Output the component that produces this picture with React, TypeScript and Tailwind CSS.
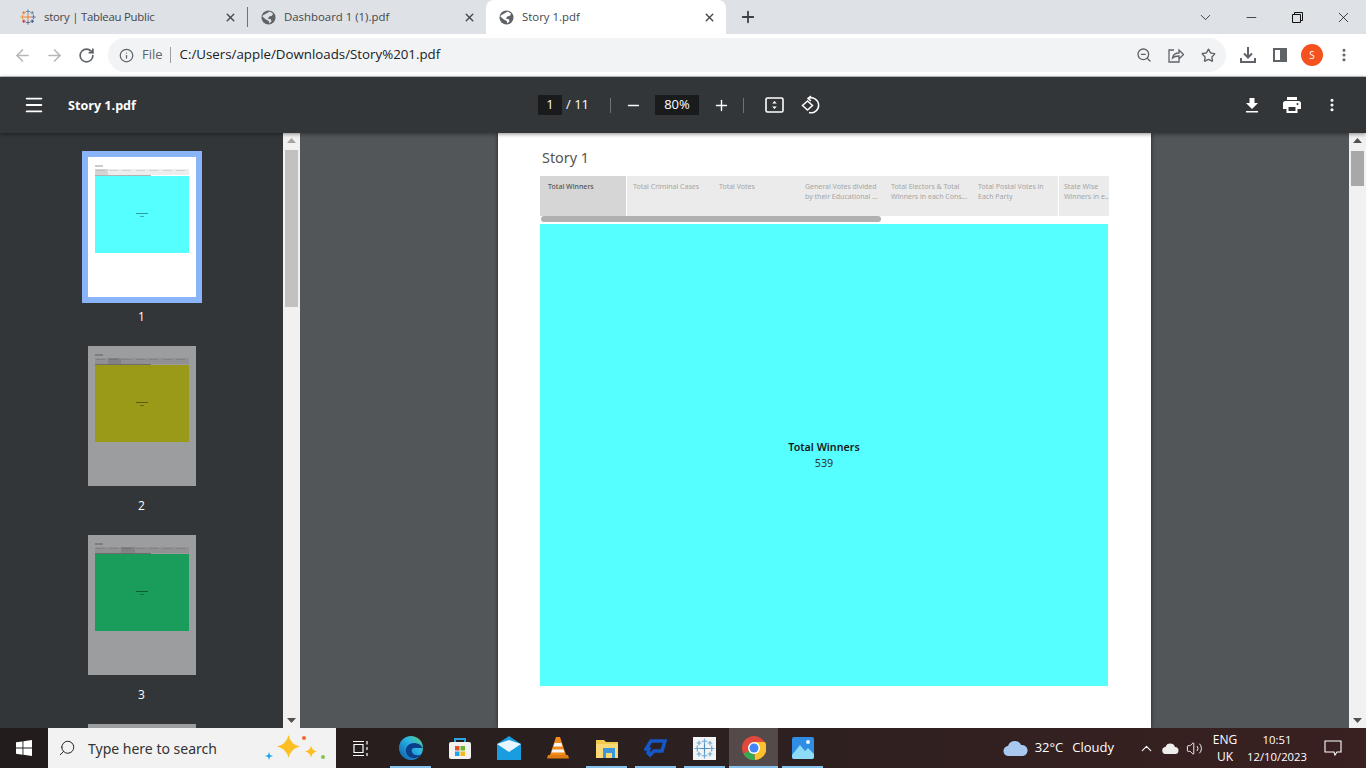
import React from "react";
import { ArrowLeft, ArrowRight, RotateCw, Info, ZoomOut, Star, X, Plus, Minus, ChevronDown, ChevronUp, MoreVertical, Menu, Search, Volume2 } from "lucide-react";

const uiFont = "font-['Open_Sans','Noto_Sans',sans-serif]";

type ThumbProps = { page: number; color: string; active?: boolean; tab: number };

const Thumb: React.FC<ThumbProps> = ({ page, color, active, tab }) => {
  return (
    <div className="flex shrink-0 flex-col items-center">
      <div className={active ? "border-[6px] border-[#8ab4f8]" : "border-[6px] border-transparent"}>
        <div className={`relative h-[140px] w-[108px] ${active ? "bg-white" : "bg-[#9c9d9f]"}`}>
          <div className="px-[7px] pt-[8px]">
            <div className="h-[2px] w-[8px] bg-black/20" />
            <div className="mt-[2px] flex h-[6px] w-[94px] bg-black/[0.07]">
              {[0, 1, 2, 3, 4, 5, 6].map((i) => (
                <div key={i} className={`flex-1 px-[1px] pt-[1px] ${i === tab ? "bg-black/10" : ""}`}>
                  <div className="h-[1px] w-[80%] bg-black/10" />
                </div>
              ))}
            </div>
            <div className="h-[1px] w-[56px] bg-black/30" />
            <div className={`flex h-[77px] w-[94px] flex-col items-center justify-center ${color}`}>
              <div className="h-[1px] w-[12px] bg-black/40" />
              <div className="mt-[2px] h-[1px] w-[4px] bg-black/30" />
            </div>
          </div>
        </div>
      </div>
      <div className={`mt-[4px] h-[20px] text-[12px] leading-[20px] text-white ${uiFont}`}>{page}</div>
    </div>
  );
};

const StoryTab: React.FC<{ lines: string[]; box: string; active?: boolean }> = ({ lines, box, active }) => {
  return (
    <div className={`h-full shrink-0 pt-[6px] text-[7px] leading-[10px] ${box} ${active ? "bg-[#d6d6d6] font-medium text-[#555]" : "text-[#a5a5a5]"}`}>
      {lines.map((l) => (
        <div key={l} className="whitespace-nowrap">{l}</div>
      ))}
    </div>
  );
};

const TaskIcon: React.FC<{ children: React.ReactNode; active?: boolean; running?: boolean }> = ({ children, active, running }) => {
  return (
    <div className={`relative flex h-full w-[49px] items-center justify-center ${active ? "bg-[#544a4a]" : ""}`}>
      {children}
      {running && <div className={`absolute bottom-0 h-[2px] bg-[#86c2ee] ${active ? "left-0 right-0" : "left-[4px] right-[4px]"}`} />}
    </div>
  );
};

const ChromeTab: React.FC<{ title: string; icon: React.ReactNode; width: string; active?: boolean; titleClass?: string }> = ({ title, icon, width, active, titleClass }) => {
  return (
    <div className={`flex h-full shrink-0 items-center pl-[12px] pr-[10px] ${width} ${active ? "rounded-t-[8px] bg-white" : ""}`}>
      <div className="flex h-[16px] w-[16px] shrink-0 items-center justify-center">{icon}</div>
      <div className={`ml-[8px] flex-1 truncate text-[11.4px] text-[#45474a] ${titleClass ?? ""}`}>{title}</div>
      <X size={13} strokeWidth={2.6} className="text-[#45474a]" />
    </div>
  );
};

const PageGlobe: React.FC<{ bg: string }> = ({ bg }) => {
  return (
    <svg width="15" height="15" viewBox="0 0 16 16">
      <circle cx="8" cy="8" r="7.5" fill="#5f6368" />
      <path d="M9.5 1.700l3.300 2-1 2.500-3 .6-1.600 2.200 3.300.8.800 2.200-2.300 2.300-.800-2.700-3-1.500-3.700-3.200.300-1z" fill={bg} />
    </svg>
  );
};

const ScrollArrow: React.FC<{ up?: boolean; color: string; pos: string }> = ({ up, color, pos }) => {
  return (
    <svg width="9" height="5" viewBox="0 0 9 5" className={`absolute left-[4px] ${pos}`} fill={color}>
      <path d={up ? "M4.5 0L9 5H0z" : "M4.5 5L9 0H0z"} />
    </svg>
  );
};

const TableauMark: React.FC<{ size: number; mono?: boolean }> = ({ size, mono }) => {
  const plus = [
    [8, 8, 3.4, mono ? "#4f8fc0" : "#e8762c"],
    [8, 2.5, 2.2, mono ? "#6fa8d0" : "#5b879b"],
    [8, 13.5, 2.2, mono ? "#6fa8d0" : "#5b6591"],
    [2.5, 8, 2.2, mono ? "#6fa8d0" : "#eb912c"],
    [13.5, 8, 2.2, mono ? "#6fa8d0" : "#5b6591"],
    [3.8, 3.8, 1.8, mono ? "#6fa8d0" : "#e8762c"],
    [12.2, 3.8, 1.8, mono ? "#6fa8d0" : "#59879b"],
    [3.8, 12.2, 1.8, mono ? "#6fa8d0" : "#c72035"],
    [12.2, 12.2, 1.8, mono ? "#6fa8d0" : "#1f457e"],
  ] as const;
  return (
    <svg width={size} height={size} viewBox="0 0 16 16">
      {plus.map(([x, y, r, c]) => (
        <path key={`${x}-${y}`} d={`M${x - r} ${y}H${x + r}M${x} ${y - r}V${y + r}`} stroke={c} strokeWidth="0.9" />
      ))}
    </svg>
  );
};

export default function App() {
  return (
    <div className={`flex h-[768px] w-[1366px] flex-col overflow-hidden bg-[#525659] ${uiFont}`}>
      {/* tab strip */}
      <div className="flex h-[34px] shrink-0 items-stretch bg-[#dee1e6]">
        <div className="flex h-full items-stretch pl-[8px]">
          <ChromeTab width="w-[239px]" title="story | Tableau Public" titleClass="tracking-[-0.25px]" icon={<TableauMark size={16} />} />
          <div className="my-[7px] w-[1px] bg-[#6f7276]" />
          <ChromeTab width="w-[238px]" title="Dashboard 1 (1).pdf" icon={<PageGlobe bg="#dee1e6" />} />
          <ChromeTab width="w-[240px]" title="Story 1.pdf" active icon={<PageGlobe bg="#ffffff" />} />
          <div className="ml-[13px] flex items-center">
            <Plus size={18} strokeWidth={2.4} className="text-[#3c4043]" />
          </div>
        </div>
        <div className="flex-1" />
        <div className="flex items-center text-[#111]">
          <div className="flex w-[46px] justify-center"><ChevronDown size={17} strokeWidth={1.1} /></div>
          <div className="flex w-[46px] justify-center"><Minus size={15} strokeWidth={1.2} /></div>
          <div className="flex w-[46px] justify-center">
            <svg width="11" height="11" viewBox="0 0 11 11" fill="none" stroke="#111"><path d="M.5 2.500h8v8h-8zM2.500 2.500v-2h8v8h-2" /></svg>
          </div>
          <div className="flex w-[46px] justify-center"><X size={17} strokeWidth={1.1} /></div>
        </div>
      </div>

      {/* address bar */}
      <div className="flex h-[42px] shrink-0 items-center bg-white text-[#5f6368]">
        <div className="flex w-[108px] items-center pl-[13px]">
          <ArrowLeft size={19} className="text-[#b5b7ba]" />
          <ArrowRight size={19} className="ml-[13px] text-[#b5b7ba]" />
          <RotateCw size={17} strokeWidth={2.4} className="ml-[14px] text-[#5f6368]" />
        </div>
        <div className="flex h-[34px] w-[1118px] items-center rounded-full bg-[#f1f3f4] pl-[11px]">
          <Info size={15} />
          <span className="ml-[8px] text-[13px] text-[#5f6368]">File</span>
          <div className="ml-[7px] h-[16px] w-[1px] bg-[#9aa0a6]" />
          <span className="ml-[9px] text-[13.3px] text-[#202124]">C:/Users/apple/Downloads/Story%201.pdf</span>
          <div className="flex-1" />
          <ZoomOut size={16} className="mr-[1px]" />
          <svg width="16" height="15" viewBox="0 0 16 15" fill="none" stroke="#5f6368" strokeWidth="1.3" className="ml-[15px]">
            <path d="M6 2H1v12h10v-3M4.500 10c.5-3 3-5 6.500-5V2l4.500 4.500L11 11V8c-3 0-5 .5-6.500 2z" />
          </svg>
          <Star size={15} strokeWidth={2.2} className="ml-[17px]" />
          <div className="w-[10px]" />
        </div>
        <div className="flex flex-1 items-center">
          <svg width="18" height="18" viewBox="0 0 18 18" className="ml-[13px]" fill="none" stroke="#5f6368" strokeWidth="2">
            <path d="M9 1v10M5 7.500l4 4 4-4M2 12v4h14v-4" />
          </svg>
          <div className="ml-[16px] flex h-[14px] w-[14px] justify-end border-2 border-[#5f6368]">
            <div className="h-full w-[5px] bg-[#5f6368]" />
          </div>
          <div className="ml-[14px] flex h-[22px] w-[22px] items-center justify-center rounded-full bg-[#f4511e] text-[10px] text-white">S</div>
          <MoreVertical size={16} strokeWidth={2.6} className="ml-[13px]" />
        </div>
      </div>
      <div className="h-[1px] shrink-0 bg-[#c8cacc]" />

      {/* viewer toolbar */}
      <div className="z-10 flex h-[56px] shrink-0 items-center bg-[#323639] text-white shadow-[0_1px_4px_rgba(0,0,0,0.45)]">
        <div className="flex w-[538px] items-center">
          <Menu size={22} strokeWidth={2} className="ml-[23px]" />
          <span className="ml-[23px] pt-[2px] text-[12.6px] font-bold">Story 1.pdf</span>
        </div>
        <div className="flex items-center text-[13px]">
          <div className="flex h-[20px] w-[24px] items-center justify-center bg-[#191b1c]">1</div>
          <span className="ml-[4px] w-[30px]">/ 11</span>
          <div className="ml-[14px] h-[15px] w-[1px] bg-[#6f7275]" />
          <Minus size={17} strokeWidth={2} className="ml-[14px]" />
          <div className="ml-[13px] flex h-[20px] w-[44px] items-center justify-center bg-[#191b1c]">80%</div>
          <Plus size={17} strokeWidth={2} className="ml-[14px]" />
          <div className="ml-[13px] h-[15px] w-[1px] bg-[#6f7275]" />
          <svg width="20" height="18" viewBox="0 0 20 18" fill="none" className="ml-[21px]">
            <rect x="1" y="2" width="17" height="14" rx="1.5" stroke="white" strokeWidth="1.6" />
            <path d="M9.500 5l2.300 2.600H7.200zM9.500 13l2.300-2.600H7.200z" fill="white" />
          </svg>
          <svg width="20" height="20" viewBox="0 0 20 20" fill="none" className="ml-[16px]" stroke="white" strokeWidth="1.5">
            <path d="M7 3.500a7.500 7.500 0 1 1 1 14" />
            <path d="M10 1L7 3.500 10 6" />
            <path d="M6.500 6L1.500 10.500l5 4.500 5-4.500z" />
          </svg>
        </div>
        <div className="flex-1" />
        <svg width="14" height="16" viewBox="0 0 14 16" fill="white" className="mr-[24px]">
          <path d="M4.500 1h5v5h3.500L7 12 1 6h3.500zM1 14h12v1.600H1z" />
        </svg>
        <svg width="18" height="16" viewBox="0 0 18 16" fill="white" className="mr-[23px]">
          <path d="M4 0h10v3H4zM2.500 4h13A2.500 2.500 0 0 1 18 6.500V12h-3.500v4h-11v-4H0V6.500A2.500 2.500 0 0 1 2.500 4zM5.500 10v4h7v-4zM14.500 6a1 1 0 1 0 0 2 1 1 0 0 0 0-2z" fillRule="evenodd" />
        </svg>
        <MoreVertical size={16} strokeWidth={2.6} className="mr-[26px]" />
      </div>

      {/* viewer body */}
      <div className="flex h-[595px] shrink-0 overflow-hidden">
        <div className="flex w-[283px] shrink-0 flex-col items-center gap-[13px] overflow-hidden bg-[#323639] pt-[18px]">
          <Thumb page={1} color="bg-[#55ffff]" tab={0} active />
          <Thumb page={2} color="bg-[#9a9a18]" tab={1} />
          <Thumb page={3} color="bg-[#1a9c5b]" tab={2} />
          <div className="mt-[6px] h-[20px] w-[108px] shrink-0 bg-[#9c9d9f]" />
        </div>
        <div className="relative w-[17px] shrink-0 bg-[#f1f1f1]">
          <div className="absolute left-[2px] right-[2px] top-[17px] h-[157px] bg-[#c1c1c1]" />
          <ScrollArrow up color="#a3a3a3" pos="top-[5px]" />
          <ScrollArrow color="#505050" pos="bottom-[5px]" />
        </div>
        <div className="flex flex-1 overflow-hidden pl-[198px]">
          <div className="h-full w-[653px] shrink-0 bg-white pl-[42px] pt-[16px] font-['Noto_Sans',sans-serif] shadow-[0_0_4px_rgba(0,0,0,0.6)]">
            <div className="ml-[2px] text-[14.4px] leading-[18px] text-[#555]">Story 1</div>
            <div className="mt-[9px] flex h-[40px] w-[569px] overflow-hidden bg-[#ebebeb]">
              <StoryTab box="w-[86px] pl-[8px]" lines={["Total Winners"]} active />
              <StoryTab box="w-[85px] border-l border-white pl-[6px]" lines={["Total Criminal Cases"]} />
              <StoryTab box="w-[86px] pl-[8px]" lines={["Total Votes"]} />
              <StoryTab box="w-[86px] pl-[8px]" lines={["General Votes divided", "by their Educational ..."]} />
              <StoryTab box="w-[87px] pl-[8px]" lines={["Total Electors & Total", "Winners in each Cons..."]} />
              <StoryTab box="w-[88px] pl-[8px]" lines={["Total Postal Votes in", "Each Party"]} />
              <StoryTab box="w-[51px] border-l border-white pl-[5px]" lines={["State Wise", "Winners in e.."]} />
            </div>
            <div className="ml-[1px] h-[6px] w-[340px] rounded-full bg-[#b0b0b0]" />
            <div className="mt-[2px] flex h-[462px] w-[568px] flex-col items-center justify-center bg-[#55ffff] text-[10.7px] leading-[16px] text-[#333]">
              <div className="font-semibold text-[#1a1a1a]">Total Winners</div>
              <div>539</div>
            </div>
          </div>
        </div>
        <div className="relative w-[17px] shrink-0 bg-[#f1f1f1]">
          <div className="absolute left-[2px] right-[2px] top-[18px] h-[35px] bg-[#a8a8a8]" />
          <ScrollArrow up color="#505050" pos="top-[5px]" />
          <ScrollArrow color="#505050" pos="bottom-[5px]" />
        </div>
      </div>

      {/* taskbar */}
      <div className="flex h-[40px] shrink-0 items-center bg-gradient-to-r from-[#231c1c] via-[#2c2020] to-[#3a2020] text-white">
        <div className="flex h-full w-[48px] items-center justify-center">
          <svg width="16" height="16" viewBox="0 0 16 16" fill="white"><path d="M0 2.300l6.500-.9v6.200H0zM7.400 1.300L16 0v7.600H7.400zM0 8.500h6.500v6.200L0 13.800zM7.400 8.500H16V16l-8.600-1.200z" /></svg>
        </div>
        <div className="flex h-full w-[288px] items-center bg-[#f2f2f2] pl-[11px]">
          <Search size={18} strokeWidth={1.3} className="-ml-[1px] -scale-x-100 text-[#222]" />
          <span className="ml-[12px] font-['Noto_Sans',sans-serif] text-[14px] text-[#333]">Type here to search</span>
          <svg width="66" height="28" viewBox="0 0 66 28" className="ml-[45px]">
            <path d="M26.500 1q2 9.500 11.500 11.500-9.500 2-11.500 11.500-2-9.500-11.500-11.500 9.500-2 11.500-11.500z" fill="#fbbf24" />
            <path d="M49 11.500q1 5 6 6-5 1-6 6-1-5-6-6 5-1 6-6z" fill="#fbbf24" />
            <path d="M7 18l1 3 3 1-3 1-1 3-1-3-3-1 3-1z" fill="#1ea5e8" />
            <circle cx="42" cy="4" r="2" fill="#f0682b" />
            <circle cx="61" cy="23" r="2" fill="#8bc34a" />
          </svg>
        </div>
        <div className="flex h-full w-[50px] items-center justify-center">
          <svg width="17" height="17" viewBox="0 0 17 17" fill="none" stroke="white" strokeWidth="1.2"><path d="M0 1.500h11M0 15.500h11M1 4.500h9v8H1zM14 1v3.500M14 7v3M14 13v3" /></svg>
        </div>
        <TaskIcon running>
          <svg width="24" height="24" viewBox="0 0 24 24">
            <defs><linearGradient id="edge" x1="0" y1="1" x2="1" y2="0"><stop offset="0" stopColor="#0c59a4" /><stop offset="0.6" stopColor="#2bb4e8" /><stop offset="1" stopColor="#5fd06a" /></linearGradient></defs>
            <circle cx="12" cy="12" r="12" fill="url(#edge)" />
            <path d="M24 13c-1-4-5-6-9-6-5 0-9 4-8 9 1 4 5 7 10 6 3-1 5-2 6-4-3 2-9 2-10-2-1-2 0-4 3-4h8z" fill="#0b3f8a" />
          </svg>
        </TaskIcon>
        <TaskIcon>
          <svg width="24" height="24" viewBox="0 0 24 24">
            <path d="M7 7V3h10v4" fill="none" stroke="#2ba5e0" strokeWidth="2" />
            <rect x="1" y="6" width="22" height="17" rx="2" fill="#f2f2f2" />
            <rect x="7" y="10" width="4.5" height="4.5" fill="#e5512d" />
            <rect x="12.5" y="10" width="4.5" height="4.5" fill="#6fb52c" />
            <rect x="7" y="15.5" width="4.5" height="4.5" fill="#1ea5e8" />
            <rect x="12.5" y="15.5" width="4.5" height="4.5" fill="#f9b818" />
          </svg>
        </TaskIcon>
        <TaskIcon>
          <svg width="24" height="24" viewBox="0 0 24 24"><path d="M0 8l12-8 12 8v16H0z" fill="#1a9ce0" /><path d="M0 8l12 8 12-8-12-4z" fill="#e8f6ff" /></svg>
        </TaskIcon>
        <TaskIcon>
          <svg width="22" height="24" viewBox="0 0 22 24"><path d="M9 1h4l6 18H3z" fill="#f28a1c" /><path d="M7.600 7h6.800l1 3.500H6.500zM5.500 13.500h11l1 3H4.500z" fill="#f6f6f6" /><path d="M1 19h20l1 3.500H0z" fill="#e07d12" /></svg>
        </TaskIcon>
        <TaskIcon running>
          <svg width="22" height="20" viewBox="0 0 22 20"><path d="M0 2h8l2 2h12v16H0z" fill="#f2c94c" /><path d="M0 6h22v14H0z" fill="#f9d976" /><path d="M7 10h12v10h-3v-5h-6v5H7z" fill="#3a96dd" /></svg>
        </TaskIcon>
        <TaskIcon running>
          <svg width="24" height="20" viewBox="0 0 24 20" fill="none" stroke="#1457c8" strokeWidth="3.5"><path d="M7 3h14l-3 10H10l-4 4-2-2 1-4H2z" /></svg>
        </TaskIcon>
        <TaskIcon running>
          <div className="flex h-[23px] w-[23px] items-center justify-center bg-[#f2f4f6]"><TableauMark size={21} mono /></div>
        </TaskIcon>
        <TaskIcon running active>
          <svg width="24" height="24" viewBox="0 0 24 24">
            <circle cx="12" cy="12" r="12" fill="#e2483d" />
            <path d="M12 12L1.600 18a12 12 0 0 0 11.400 6z" fill="#34a853" />
            <path d="M12 6h10.900a12 12 0 0 1-9.900 18z" fill="#fbc02d" />
            <circle cx="12" cy="12" r="6" fill="white" />
            <circle cx="12" cy="12" r="4.5" fill="#4285f4" />
          </svg>
        </TaskIcon>
        <TaskIcon running>
          <svg width="22" height="22" viewBox="0 0 22 22"><rect width="22" height="22" rx="2" fill="#2f8de4" /><path d="M0 18l8-10 5 6 3-3 6 6v3a2 2 0 0 1-2 2H2a2 2 0 0 1-2-2z" fill="#8edbf7" /><circle cx="16" cy="5" r="2" fill="#e8f3ff" /></svg>
        </TaskIcon>
        <div className="flex-1" />
        <svg width="26" height="17" viewBox="0 0 26 17" className="mr-[6px]"><path d="M6 16a5 5 0 0 1-1-10 7 7 0 0 1 13-1 5.500 5.500 0 0 1 2 11z" fill="#a8c8f0" /></svg>
        <span className="text-[13px]">32°C</span>
        <span className="ml-[9px] text-[13px]">Cloudy</span>
        <ChevronUp size={17} strokeWidth={1.5} className="ml-[24px]" />
        <svg width="17" height="11" viewBox="0 0 17 11" className="ml-[7px]"><path d="M4 11a3.500 3.500 0 0 1-.5-7 5 5 0 0 1 9.500 0 3.500 3.500 0 0 1 0 7z" fill="#eeeeee" /></svg>
        <Volume2 size={17} strokeWidth={1.3} className="ml-[7px]" />
        <div className="ml-[10px] flex w-[24px] flex-col items-center text-[12px] leading-[17px]">
          <span>ENG</span>
          <span>UK</span>
        </div>
        <div className="ml-[5px] flex w-[70px] flex-col items-center text-[11.3px] leading-[17px]">
          <span>10:51</span>
          <span>12/10/2023</span>
        </div>
        <svg width="18" height="17" viewBox="0 0 18 17" fill="none" stroke="white" strokeWidth="1.1" className="ml-[12px] mr-[24px]"><path d="M1 1h16v11h-4l-2 3-1-3H1z" /></svg>
      </div>
    </div>
  );
}
